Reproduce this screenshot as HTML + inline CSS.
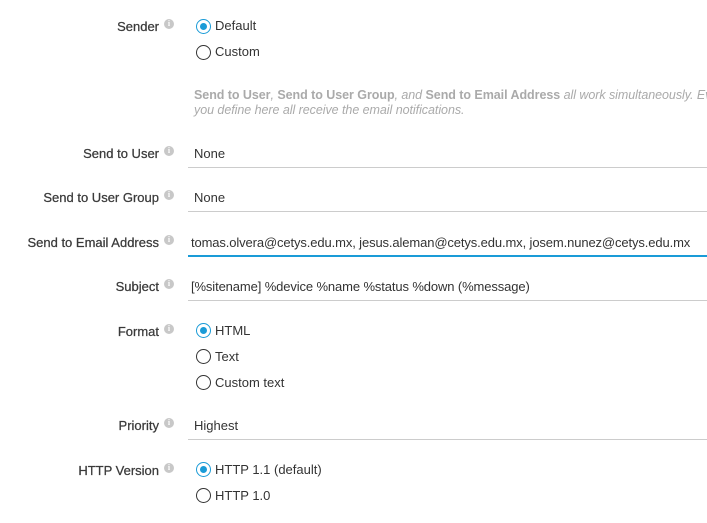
<!DOCTYPE html>
<html><head><style>
body{margin:0;width:707px;height:523px;background:#fff;font-family:"Liberation Sans",sans-serif;font-size:13px;color:#333;position:relative;overflow:hidden}
.l{position:absolute;right:548px;text-align:right;white-space:nowrap;color:#3a3a3a;-webkit-text-stroke:0.25px #3a3a3a}
.i{position:absolute;left:164px;width:10px;height:10px;border-radius:50%;background:#c8c8c8;color:#fff;font-size:8px;font-weight:bold;text-align:center;line-height:10px;font-family:"Liberation Serif",serif}
.t{position:absolute;white-space:nowrap}
.w{letter-spacing:-0.1px}
.r{position:absolute;left:196px;width:13px;height:13px;border:1.8px solid #333;border-radius:50%}
.r.on{border-color:#1a9bd7}
.r.on:after{content:"";position:absolute;left:3px;top:3px;width:7px;height:7px;border-radius:50%;background:#1a9bd7}
.u{position:absolute;left:188px;right:0;height:1px;background:#ccc}
.h{position:absolute;left:194px;color:#aaa;font-style:italic;font-size:12.5px;white-space:nowrap;letter-spacing:-0.05px}
.h b{font-style:normal}
</style></head><body>
<div class="l" style="top:19px">Sender</div><div class="i" style="top:19px">i</div>
<div class="r on" style="top:19px"></div><div class="t" style="left:215px;top:18px">Default</div>
<div class="r" style="top:45px"></div><div class="t" style="left:215px;top:44px">Custom</div>
<div class="h" style="top:88px"><b>Send to User</b>, <b>Send to User Group</b>, and <b>Send to Email Address</b> all work simultaneously. Eve</div>
<div class="h" style="top:103px">you define here all receive the email notifications.</div>

<div class="l" style="top:146px">Send to User</div><div class="i" style="top:146px">i</div>
<div class="t" style="left:194px;top:146px">None</div><div class="u" style="top:167px"></div>

<div class="l" style="top:190px">Send to User Group</div><div class="i" style="top:190px">i</div>
<div class="t" style="left:194px;top:190px">None</div><div class="u" style="top:211px"></div>

<div class="l" style="top:235px">Send to Email Address</div><div class="i" style="top:235px">i</div>
<div class="t" style="left:191px;top:235px;letter-spacing:-0.12px">tomas.olvera@cetys.edu.mx, jesus.aleman@cetys.edu.mx, josem.nunez@cetys.edu.mx</div><div class="u" style="top:255px;height:2px;background:#1a9bd7"></div>

<div class="l" style="top:279px">Subject</div><div class="i" style="top:279px">i</div>
<div class="t" style="left:191px;top:279px;letter-spacing:-0.12px">[%sitename] %device %name %status %down (%message)</div><div class="u" style="top:300px"></div>

<div class="l" style="top:324px">Format</div><div class="i" style="top:324px">i</div>
<div class="r on" style="top:323px"></div><div class="t" style="left:215px;top:323px">HTML</div>
<div class="r" style="top:349px"></div><div class="t" style="left:215px;top:349px">Text</div>
<div class="r" style="top:375px"></div><div class="t" style="left:215px;top:375px">Custom text</div>

<div class="l" style="top:418px">Priority</div><div class="i" style="top:418px">i</div>
<div class="t" style="left:194px;top:418px">Highest</div><div class="u" style="top:439px"></div>

<div class="l" style="top:463px">HTTP Version</div><div class="i" style="top:463px">i</div>
<div class="r on" style="top:462px"></div><div class="t" style="left:215px;top:462px">HTTP 1.1 (default)</div>
<div class="r" style="top:488px"></div><div class="t" style="left:215px;top:488px">HTTP 1.0</div>
</body></html>
